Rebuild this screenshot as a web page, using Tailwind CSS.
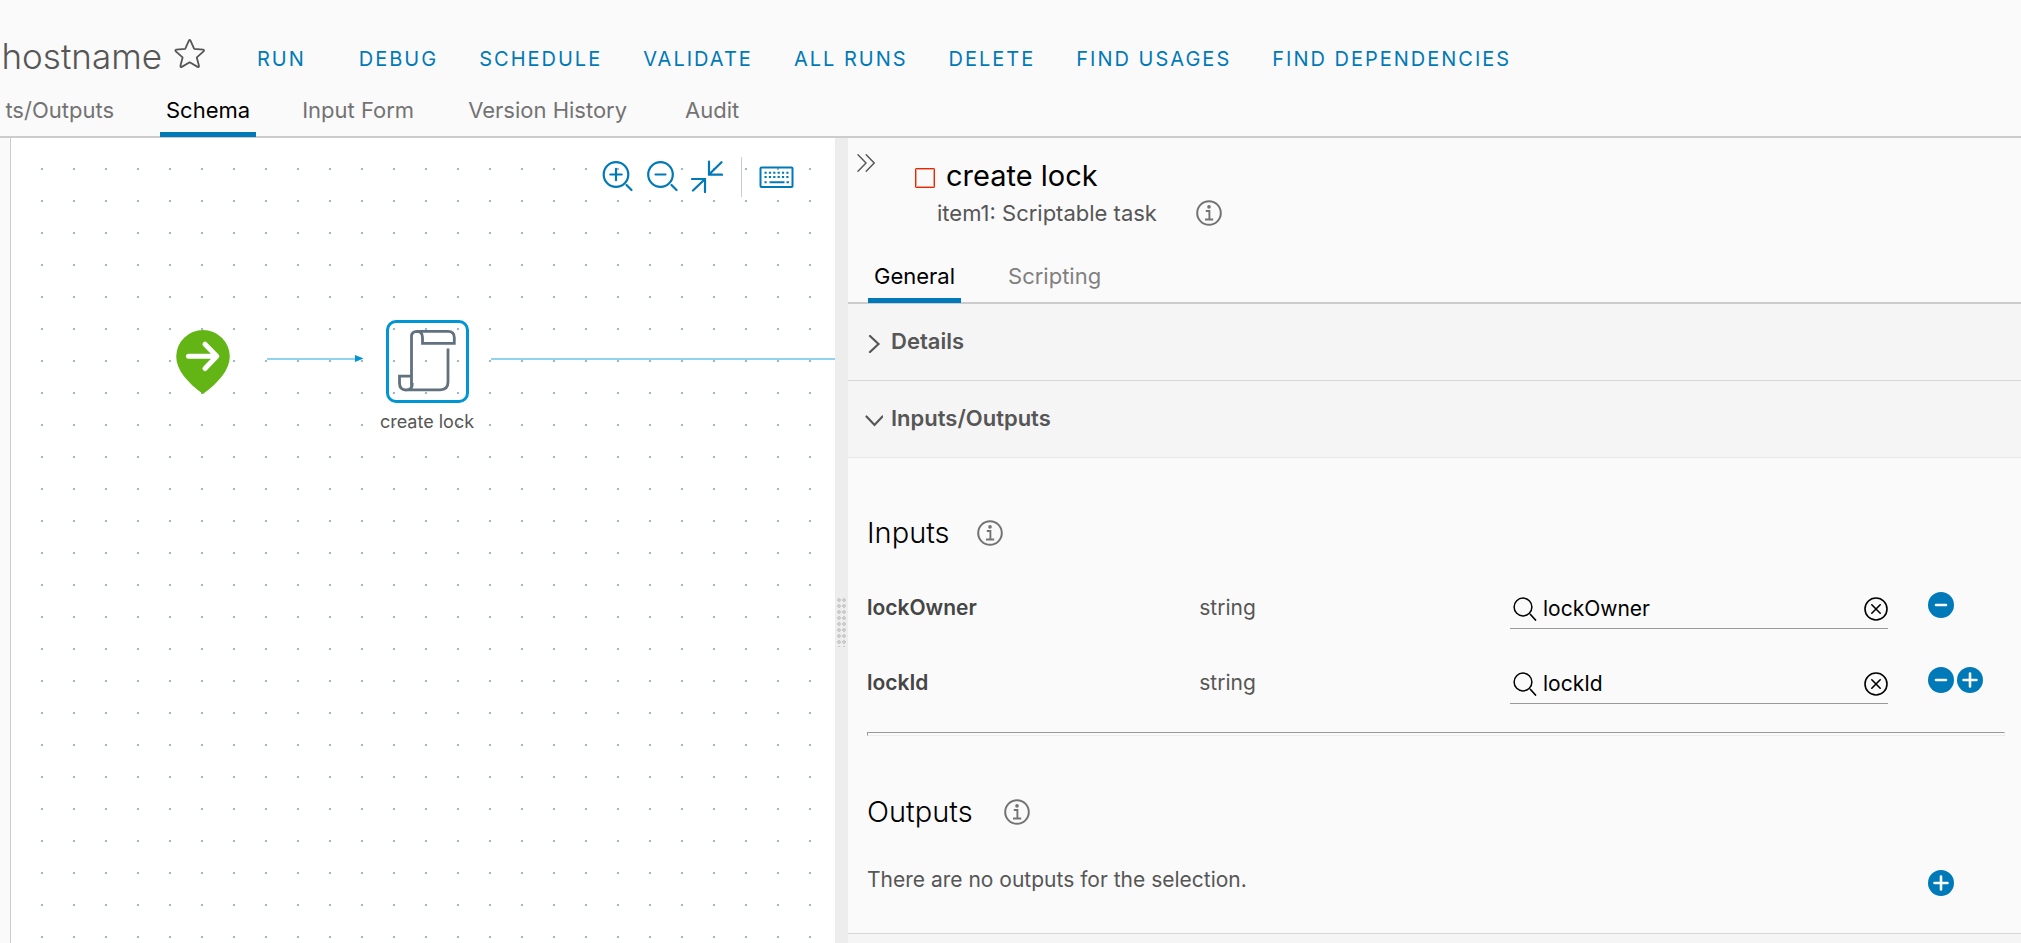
<!DOCTYPE html>
<html lang="en">
<head>
<meta charset="utf-8">
<title>hostname - Workflow schema</title>
<script src="https://cdn.jsdelivr.net/npm/@tailwindcss/browser@4"></script>
</head>
<body class="h-screen overflow-hidden flex flex-col bg-[#fafafa] text-[#565656] font-['Inter','Noto_Sans',sans-serif]">

<!-- Shared icon symbols -->
<svg class="hidden" aria-hidden="true">
  <symbol id="info" viewBox="0 0 26 26">
    <circle cx="13" cy="13" r="11.8" fill="none" stroke="#737373" stroke-width="2"/>
    <circle cx="13" cy="6.9" r="1.8" fill="#737373"/>
    <path d="M9.8 11h3.6v8.2M9 19.5h8.2" fill="none" stroke="#737373" stroke-width="1.9"/>
  </symbol>
  <symbol id="plus" viewBox="0 0 26 26">
    <circle cx="13" cy="13" r="13" fill="#0079b8"/>
    <path d="M6.5 13h13M13 6.5v13" stroke="#fafafa" stroke-width="2.6" stroke-linecap="round"/>
  </symbol>
  <symbol id="minus" viewBox="0 0 26 26">
    <circle cx="13" cy="13" r="13" fill="#0079b8"/>
    <path d="M8 13h10" stroke="#fafafa" stroke-width="2.6" stroke-linecap="round"/>
  </symbol>
  <symbol id="search" viewBox="0 0 24 24">
    <circle cx="10" cy="10" r="8.9" fill="none" stroke="#000" stroke-width="1.5"/>
    <path d="M17.5 17.5l5 5.500" stroke="#000" stroke-width="1.7" stroke-linecap="round"/>
  </symbol>
  <symbol id="clear" viewBox="0 0 24 24">
    <circle cx="12" cy="12" r="11" fill="none" stroke="#000" stroke-width="1.6"/>
    <path d="M7.800 7.800l8.400 8.400M16.200 7.800l-8.400 8.400" stroke="#000" stroke-width="1.6" stroke-linecap="round"/>
  </symbol>
</svg>

<header class="h-[138px] shrink-0 border-b-2 border-[#cccccc] flex flex-col justify-between">
  <div class="flex items-center pt-8 h-20">
    <div class="w-[162px] flex justify-end shrink-0">
      <h1 class="text-[35px] leading-[48px] font-light">hostname</h1>
    </div>
    <button class="ml-3 mr-[51px] pb-1 shrink-0" aria-label="Favorite">
      <svg class="w-8 h-8" viewBox="0 0 32 32" fill="none" stroke="#565656" stroke-width="1.800" stroke-linejoin="round"><path d="M14.900 2.600q.8-1.400 1.600 0l3.700 8.300 8.900.8q1.500.5.500 1.600l-6.800 6.100 2.200 8.500q0 1.500-1.400 1l-7.900-4.600-7.900 4.600q-1.400.5-1.400-1l2.200-8.500-6.800-6.100q-1-1.100.5-1.600l8.900-.8z"/></svg>
    </button>
    <nav class="flex items-center gap-[41px] pt-1.5 text-[20px] leading-6 tracking-[2px] text-[#0079b8] whitespace-nowrap">
      <button class="mr-3">RUN</button>
      <button>DEBUG</button>
      <button>SCHEDULE</button>
      <button>VALIDATE</button>
      <button>ALL RUNS</button>
      <button>DELETE</button>
      <button>FIND USAGES</button>
      <button>FIND DEPENDENCIES</button>
    </nav>
  </div>
  <nav class="flex gap-[42px] text-[22px] leading-7 text-[#737373] whitespace-nowrap -mb-[1px]">
    <div class="w-[118px] pr-1 flex justify-end"><button class="h-[41px] pb-[14px]">ts/Outputs</button></div>
    <button class="h-[41px] pb-[9px] px-1.5 text-black border-b-5 border-[#0079b8]">Schema</button>
    <button class="h-[41px] pb-[14px] px-1">Input Form</button>
    <button class="h-[41px] pb-[14px] px-2">Version History</button>
    <button class="h-[41px] pb-[14px] px-2">Audit</button>
  </nav>
</header>

<main class="flex-1 min-h-0 grid grid-cols-[835fr_13px_1173fr]">
  <!-- Schema canvas -->
  <section class="ml-[10px] border-l border-[#cccccc] relative overflow-hidden bg-white bg-[radial-gradient(circle_at_31px_31px,#9fb6ca_0.8px,transparent_1.6px)] bg-size-[32px_32px]" aria-label="Schema">
    <div class="flex justify-end items-start pt-[19px] pr-10 text-[#0079b8]">
      <button aria-label="Zoom in"><svg class="w-8 h-9" viewBox="0 0 32 36" fill="none" stroke="currentColor" stroke-width="2.200" stroke-linecap="round"><circle cx="14" cy="17.500" r="12.300"/><path d="M8.300 17.500h11.400M14 11.800v11.400M24.500 28l5 5"/></svg></button>
      <button class="ml-3" aria-label="Zoom out"><svg class="w-8 h-9" viewBox="0 0 32 36" fill="none" stroke="currentColor" stroke-width="2.200" stroke-linecap="round"><circle cx="14.500" cy="17.500" r="12.300"/><path d="M9.500 17.500h10M25.500 28l5 5"/></svg></button>
      <button class="ml-[13px]" aria-label="Fit to screen"><svg class="w-8 h-9" viewBox="0 0 32 36" fill="none" stroke="currentColor" stroke-width="2.200" stroke-linecap="round"><path d="M18 4.500v13.200h13M18.500 17l12-11.800M1 22h13v13M13.500 22.500L2 33.500"/></svg></button>
      <span class="ml-[18px] w-px h-10 bg-[#cccccc]"></span>
      <button class="ml-[17px]" aria-label="Keyboard shortcuts"><svg class="w-9 h-9" viewBox="0 0 36 36" fill="none" stroke="currentColor" stroke-width="2"><rect x="1.500" y="10.500" width="32" height="19.500" rx="1"/><path d="M5.500 15.800h24.500M5.500 20h24.500" stroke-dasharray="2.200 2.160"/><path d="M5.500 25.200h2.200M10.500 25.200h15M27.500 25.200h2.400"/></svg></button>
    </div>

    <!-- Connectors -->
    <svg class="absolute left-[256px] top-[214px] w-24 h-3" viewBox="0 0 96 12"><path d="M0 7h90" stroke="#8fd3ee" stroke-width="2"/><path d="M88 3l8.500 3.500L88 10z" fill="#0095d3"/></svg>
    <div class="absolute left-[480px] right-0 top-[220px] h-[2px] bg-[#8fd3ee]"></div>

    <!-- Start node -->
    <svg class="absolute left-[165px] top-[192px] w-[54px] h-16" viewBox="0 0 54 64"><path d="M27 0A26.800 26.800 0 0 0 .2 26.500C.2 40 12 53 27 64 42 53 53.800 40 53.800 26.500A26.800 26.800 0 0 0 27 0z" fill="#62b515"/><path d="M12.500 26.300h28M29 14.200l11.800 12.100L29 38.500" fill="none" stroke="#fff" stroke-width="5" stroke-linecap="round" stroke-linejoin="round"/></svg>

    <!-- Scriptable task node -->
    <div class="absolute left-[354px] top-[182px] w-[124px] flex flex-col items-center">
      <div class="w-[83px] h-[83px] rounded-[10px] border-3 border-[#0095d3]">
        <svg class="w-full h-full" viewBox="389 323 77 77" fill="none" stroke="#61717d" stroke-width="2.800"><path d="M411.500 387.500V336.500q0-5.200 5.500-5.200h31q6.300 0 6.300 6.200V343.300H422.500V337.500q0-6-5.500-6.200M448 348.500V382q0 7.800-7.800 7.800H406.500M411.500 376.200H399.500V383q0 7 6.500 7t6.300-7"/></svg>
      </div>
      <span class="mt-[7px] text-[18px] leading-6">create lock</span>
    </div>
  </section>

  <!-- Splitter -->
  <div class="bg-[#ededed] flex justify-center items-start pt-[460px]">
    <div class="w-[9px] h-[49px] bg-[radial-gradient(circle_at_2px_2px,#cccccc_1.6px,transparent_2px)] bg-size-[5px_6px]"></div>
  </div>

  <!-- Properties panel -->
  <section class="min-w-0 flex flex-col overflow-hidden">
    <div class="h-[166px] shrink-0 border-b-2 border-[#cccccc] flex flex-col">
      <div class="flex items-start pl-[9px] pt-[15px]">
        <button class="w-[18px] mr-10" aria-label="Collapse panel"><svg class="w-[18px] h-5" viewBox="0 0 18 20" fill="none" stroke="#565656" stroke-width="1.400" stroke-linecap="round"><path d="M1 1.800l8 8.200-8 8.200M9.200 1.800l8 8.200-8 8.200"/></svg></button>
        <div class="pt-1">
          <div class="flex items-center h-[37px]">
            <span class="w-5 h-5 mt-1 rounded-[1px] border-[1px] border-[#e62700] shadow-[inset_0_0_0_1px_#f3a190] mr-[11px]"></span>
            <h2 class="text-[29px] leading-[37px] text-black">create lock</h2>
          </div>
          <div class="flex items-center h-[38px] pl-[22px]">
            <p class="text-[22px] leading-7">item1: Scriptable task</p>
            <button class="ml-[39px]" aria-label="Task information"><svg class="w-[26px] h-[26px]"><use href="#info"/></svg></button>
          </div>
        </div>
      </div>
      <div class="flex gap-[41px] pl-5 mt-auto text-[22px] leading-7 -mb-[1px]">
        <button class="h-[41px] pb-[9px] px-1.5 text-black border-b-5 border-[#0079b8]">General</button>
        <button class="h-[41px] pb-[14px] px-1.5 text-[#808080]">Scripting</button>
      </div>
    </div>

    <button class="h-[77px] shrink-0 bg-[#f5f5f5] border-b border-[#d8d8d8] flex items-center gap-2 pl-[17px] text-[22px] leading-7 font-semibold">
      <svg class="w-[18px] h-[18px] mt-1" viewBox="0 0 18 18" fill="none" stroke="#565656" stroke-width="2.200" stroke-linecap="round"><path d="M5 1l8.500 8-8.500 8"/></svg>
      <span class="pb-0.5">Details</span>
    </button>
    <button class="h-[77px] shrink-0 bg-[#f5f5f5] border-b border-[#e8e8e8] flex items-center gap-2 pl-[17px] text-[22px] leading-7 font-semibold">
      <svg class="w-[18px] h-[18px] mt-1" viewBox="0 0 18 18" fill="none" stroke="#565656" stroke-width="2.200" stroke-linecap="round"><path d="M1.500 4.500l8 8.500 8-8.500"/></svg>
      <span class="pb-0.5">Inputs/Outputs</span>
    </button>

    <div class="shrink-0 pl-[19px] pr-4 pt-[55px] pb-[31px] border-b border-[#d8d8d8]">
      <div class="flex items-center gap-[27px] h-10">
        <h3 class="text-[29px] leading-10 font-light text-black">Inputs</h3>
        <button aria-label="About inputs"><svg class="w-[26px] h-[26px]"><use href="#info"/></svg></button>
      </div>
      <table class="w-full mt-[17px] table-fixed text-[21px] leading-7 text-left">
        <colgroup><col class="w-[29.2%]"><col class="w-[27.300%]"><col class="w-[33.200%]"><col></colgroup>
        <tbody>
          <tr class="h-[75px]">
            <th scope="row" class="font-semibold text-[#454545]"><label for="in-owner">lockOwner</label></th>
            <td>string</td>
            <td>
              <div class="flex items-center h-10 mt-0.5 border-b border-[#999999] pl-[3px]">
                <svg class="w-6 h-6 mt-0.5 shrink-0"><use href="#search"/></svg>
                <input id="in-owner" type="text" value="lockOwner" class="flex-1 min-w-0 ml-1.5 h-9 bg-transparent outline-none text-[21px] text-black">
                <button class="shrink-0 pt-0.5" aria-label="Clear lockOwner"><svg class="w-6 h-6"><use href="#clear"/></svg></button>
              </div>
            </td>
            <td class="pl-10"><div class="flex gap-[3px] pb-1.5"><button aria-label="Remove lockOwner"><svg class="w-[26px] h-[26px]"><use href="#minus"/></svg></button></div></td>
          </tr>
          <tr class="h-[75px]">
            <th scope="row" class="font-semibold text-[#454545]"><label for="in-id">lockId</label></th>
            <td>string</td>
            <td>
              <div class="flex items-center h-10 mt-0.5 border-b border-[#999999] pl-[3px]">
                <svg class="w-6 h-6 mt-0.5 shrink-0"><use href="#search"/></svg>
                <input id="in-id" type="text" value="lockId" class="flex-1 min-w-0 ml-1.5 h-9 bg-transparent outline-none text-[21px] text-black">
                <button class="shrink-0 pt-0.5" aria-label="Clear lockId"><svg class="w-6 h-6"><use href="#clear"/></svg></button>
              </div>
            </td>
            <td class="pl-10"><div class="flex gap-[3px] pb-1.5"><button aria-label="Remove lockId"><svg class="w-[26px] h-[26px]"><use href="#minus"/></svg></button><button aria-label="Add input"><svg class="w-[26px] h-[26px]"><use href="#plus"/></svg></button></div></td>
          </tr>
        </tbody>
      </table>
      <hr class="mt-3 h-1 border border-t-[#999999] border-l-[#999999] border-r-[#ededed] border-b-[#ededed]">
      <div class="flex items-center gap-[31px] h-10 mt-14">
        <h3 class="text-[29px] leading-10 font-light text-black">Outputs</h3>
        <button aria-label="About outputs"><svg class="w-[26px] h-[26px]"><use href="#info"/></svg></button>
      </div>
      <div class="mt-7 h-[42px] grid grid-cols-[89.700%_1fr] items-center">
        <p class="text-[21px] leading-7 pb-0.5">There are no outputs for the selection.</p>
        <div class="pl-10 pt-1"><button class="block" aria-label="Add output"><svg class="w-[26px] h-[26px]"><use href="#plus"/></svg></button></div>
      </div>
    </div>
    <div class="flex-1 bg-[#f5f5f5]"></div>
  </section>
</main>
</body>
</html>
